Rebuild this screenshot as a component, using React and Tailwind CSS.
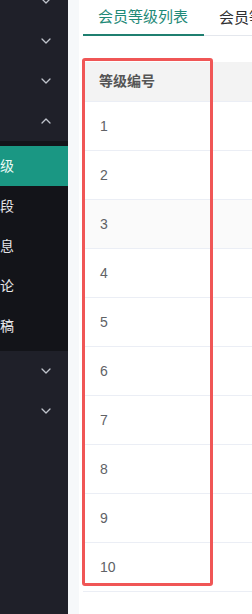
import React from 'react';

const Chevron = ({ up }) => (
  <svg width="10" height="6" viewBox="0 0 10 6" fill="none" className="block">
    <polyline
      points={up ? '1,5 5,1 9,5' : '1,1 5,5 9,1'}
      stroke="#c0c4cc"
      strokeWidth="1.3"
      strokeLinecap="round"
      strokeLinejoin="round"
    />
  </svg>
);

const MenuItem = ({ up }) => (
  <div className="h-[40px] flex items-center justify-end pr-[17px]">
    <Chevron up={up} />
  </div>
);

const subItems = [
  { label: '会员等级', active: true },
  { label: '会员字段' },
  { label: '会员信息' },
  { label: '会员评论' },
  { label: '会员投稿' },
];

const rows = [1, 2, 3, 4, 5, 6, 7, 8, 9, 10];

const App = () => {
  return (
    <div
      className="relative w-[252px] h-[614px] flex overflow-hidden bg-white"
      style={{ fontFamily: '"Liberation Sans", "Noto Sans CJK SC", sans-serif' }}
    >
      {/* sidebar */}
      <div className="w-[68px] shrink-0 bg-[#1f2029] overflow-hidden">
        <div className="-mt-[19px]">
          <MenuItem />
          <MenuItem />
          <MenuItem />
          <MenuItem up />
          <div className="bg-[#131419] py-[5px]">
            {subItems.map((item) => (
              <div
                key={item.label}
                className={`h-[40px] flex items-center ${item.active ? 'bg-[#1a9783] text-[#eafaf6]' : 'text-[#e6e7ea]'}`}
              >
                <div className="w-[14px] flex justify-end whitespace-nowrap text-[14px]">
                  <span>{item.label}</span>
                </div>
              </div>
            ))}
          </div>
          <MenuItem />
          <MenuItem />
        </div>
      </div>

      {/* main */}
      <div className="flex-1 flex bg-[#f6f8fa] pl-[11px]">
        <div className="flex-1 bg-white pl-[4px] overflow-hidden">
          <div className="h-[36px] flex border-b border-[#e4e7ed] whitespace-nowrap">
            <div className="pl-[15px] pr-[16px] flex items-center text-[15px] text-[#1f8a78] border-b-2 border-[#1f7f70] -mb-px">
              会员等级列表
            </div>
            <div className="pl-[15px] flex items-center text-[15px] text-[#303133] -mb-px">
              会员等级添加
            </div>
          </div>

          <div className="mt-[26px] w-[300px]">
            <div className="h-[40px] bg-[#f3f3f3] border-b border-[#ebeef5] flex items-center pl-[16px] text-[14px] font-bold text-[#555]">
              等级编号
            </div>
            {rows.map((n) => (
              <div
                key={n}
                className={`h-[49px] border-b border-[#ebeef5] flex items-center pl-[17px] text-[14px] text-[#606266] ${n === 3 ? 'bg-[#fafafa]' : 'bg-white'}`}
              >
                {n}
              </div>
            ))}
          </div>
        </div>
      </div>

      {/* annotation box */}
      <div className="absolute left-[82px] top-[58px] w-[131px] h-[528px] border-[3px] border-[#f05656] rounded-[3px] pointer-events-none" />
    </div>
  );
};

export default App;
